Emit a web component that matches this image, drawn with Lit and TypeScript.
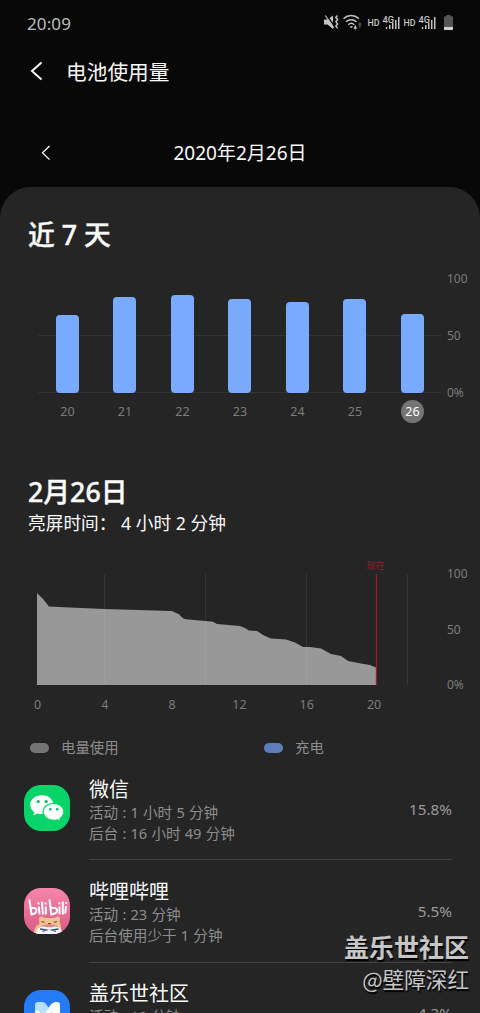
import { LitElement, html, svg, css, nothing } from 'lit';
import { customElement, property } from 'lit/decorators.js';
import { classMap } from 'lit/directives/class-map.js';
import { styleMap } from 'lit/directives/style-map.js';

export interface DayUsage {
  day: string;
  level: number;
}

export interface AppUsage {
  icon: 'wechat' | 'bilibili' | 'members';
  name: string;
  active: string;
  background: string;
  percent: string;
}

const WEEK: DayUsage[] = [
  { day: '20', level: 78 },
  { day: '21', level: 96 },
  { day: '22', level: 98 },
  { day: '23', level: 94 },
  { day: '24', level: 91 },
  { day: '25', level: 94 },
  { day: '26', level: 79 },
];

const APPS: AppUsage[] = [
  {
    icon: 'wechat',
    name: '微信',
    active: '活动 : 1 小时 5 分钟',
    background: '后台 : 16 小时 49 分钟',
    percent: '15.8%',
  },
  {
    icon: 'bilibili',
    name: '哔哩哔哩',
    active: '活动 : 23 分钟',
    background: '后台使用少于 1 分钟',
    percent: '5.5%',
  },
  {
    icon: 'members',
    name: '盖乐世社区',
    active: '活动 : 10 分钟',
    background: '后台 : 2 小时 8 分钟',
    percent: '4.2%',
  },
];

/**
 * @element battery-status-bar
 * @description Clock on the left, system indicators on the right.
 */
@customElement('battery-status-bar')
export class BatteryStatusBar extends LitElement {
  static styles = css`
    :host {
      display: flex;
      align-items: center;
      justify-content: space-between;
      height: 46px;
      padding: 0 24px 0 27px;
      box-sizing: border-box;
      color: #bdbdbd;
      font-size: 17px;
    }

    .clock {
      letter-spacing: 0.1px;
    }

    .indicators {
      display: block;
    }

    .hd {
      font: 500 9px Roboto, sans-serif;
    }

    .net {
      font: 500 9.5px Roboto, sans-serif;
    }
  `;

  @property({ type: String })
  time = '20:09';

  private renderSim(x: number) {
    return svg`
      <g transform="translate(${x} 0)" fill="#c4c4c4">
        <text class="hd" x="-.5" y="11.6" textLength="12" lengthAdjust="spacingAndGlyphs">HD</text>
        <text class="net" x="14.500" y="8.600" textLength="11.500" lengthAdjust="spacingAndGlyphs">4G</text>
        <path d="M17.800 13h1.500v2h-1.500zM21 11h1.500v4H21zM24 9h1.500v6H24zM27 6h1.500v9H27zM30 3h1.500v12H30z" />
      </g>
    `;
  }

  render() {
    return html`
      <span class="clock">${this.time}</span>
      <svg class="indicators" width="132" height="18" viewBox="0 0 132 18">
        <path d="M0 5.500h3.500l5.500-4v13.500l-5.500-4.500H0z" fill="#c4c4c4" />
        <path d="M2.500 1l8 11.500" stroke="#080808" stroke-width="1.400" />
        <path d="M1.300 1.500l8.700 12.500" stroke="#c4c4c4" stroke-width="1.200" />
        <path
          d="M13.500 1.500l-1.600 1.800 1.700 2.200-1.700 2.200 1.700 2.200-1.700 2.200 1.700 2.200"
          fill="none" stroke="#c4c4c4" stroke-width="1.500"
        />
        <g fill="none" stroke="#c4c4c4" stroke-width="1.500">
          <path d="M19.500 4.600c4.600-4 10.800-4 15.400 0" />
          <path d="M22 7.800c3-2.800 7.500-2.800 10.500 0" />
          <path d="M24.300 10.700c1.700-1.600 4.200-1.600 5.900 0" />
        </g>
        <path d="M25.500 12.300h3.500l-1.700 2z" fill="#c4c4c4" />
        <path d="M30.500 11.500h1.600v2h1.400l-2.200 2.300-2.200-2.300h1.400z" fill="#c4c4c4" />
        <path d="M35.200 13.500v-3H34l1.900-2.300 1.900 2.300h-1.200v3z" fill="#5c5c5c" />
        ${this.renderSim(44)} ${this.renderSim(80)}
        <path d="M120 3.200q0-1 1-1h1.500V1h4v1.200h1.500q1 0 1 1V13h-9z" fill="#555" />
        <path d="M120 13h9v2.300q0 .7-.7.700h-7.600q-.7 0-.7-.7z" fill="#d0d0d0" />
      </svg>
    `;
  }
}

/**
 * @element battery-week-chart
 * @description Seven bars, one for each day, with the current day marked.
 */
@customElement('battery-week-chart')
export class BatteryWeekChart extends LitElement {
  static styles = css`
    :host {
      display: grid;
      grid-template-columns: 403px 1fr;
      grid-template-rows: 124px auto;
      align-items: start;
      column-gap: 6px;
      padding-left: 38px;
      color: #7c7c7c;
      font-size: 12px;
    }

    .plot {
      display: grid;
      grid-template-columns: repeat(7, 57.5px);
      align-items: end;
      height: 114px;
      border-bottom: 1px solid #343434;
      background: linear-gradient(#343434, #343434) 0 57px / 100% 1px no-repeat;
    }

    .bar {
      width: 23px;
      margin: 0 0 -1px 17.8px;
      border-radius: 4px;
      background: #78aaff;
    }

    .scale {
      display: flex;
      flex-direction: column;
      justify-content: space-between;
      height: 130px;
      margin-top: -7px;
      line-height: 16px;
    }

    .days {
      display: grid;
      grid-template-columns: repeat(7, 57.5px);
      margin-top: -2px;
      font-size: 12.5px;
    }

    .day {
      width: 23px;
      height: 23px;
      margin-left: 18px;
      border-radius: 50%;
      line-height: 24px;
      text-align: center;
    }

    .day--current {
      background: #747474;
      color: #fff;
    }
  `;

  @property({ attribute: false })
  days: DayUsage[] = [];

  @property({ type: String })
  current = '';

  render() {
    return html`
      <div class="plot">
        ${this.days.map(
          d => html`<div class="bar" style=${styleMap({ height: `${d.level}px` })}></div>`
        )}
      </div>
      <div class="scale"><span>100</span><span>50</span><span>0%</span></div>
      <div class="days">
        ${this.days.map(
          d => html`
            <span class=${classMap({ day: true, 'day--current': d.day === this.current })}>${d.day}</span>
          `
        )}
      </div>
    `;
  }
}

/**
 * @element battery-day-chart
 * @description Battery level over the hours of one day, up to now.
 */
@customElement('battery-day-chart')
export class BatteryDayChart extends LitElement {
  static styles = css`
    :host {
      display: grid;
      grid-template-columns: 441px 1fr;
      column-gap: 6px;
      color: #7c7c7c;
      font-size: 12px;
    }

    svg {
      display: block;
    }

    .now {
      fill: #8f1f28;
      font-size: 9.3px;
    }

    .hour {
      fill: #7c7c7c;
      font-size: 12.5px;
    }

    .scale {
      display: flex;
      flex-direction: column;
      justify-content: space-between;
      height: 127px;
      margin-top: 8px;
      line-height: 16px;
    }
  `;

  render() {
    const grid = [104.5, 205.5, 306.5, 407.5];
    return html`
      <svg width="441" height="160" viewBox="0 0 441 160">
        <path
          d="M37 127V35l6 6 6 7.500 15 .8 40 1.700 68 2 7 3.200 4 4 3 1 19 1.800 8 .8 4 2.200 23 2 5 2 4 2.500 8 .5 7 4.500 7 3 15 1 9 3 8 4.500h7l11 1.500 10 5.500 10 2 7 5 13 2.500 9 1.500 6 2.500V127z"
          fill="#989898"
        />
        ${grid.map(x => svg`<path d="M${x} 16v111" stroke="#fff" stroke-opacity=".075" />`)}
        <path d="M376.500 16v111" stroke="#8f1f28" stroke-width="1.300" />
        <text class="now" x="375.500" y="10.500" text-anchor="middle">现在</text>
        ${[0, 4, 8, 12, 16, 20].map(
          h => svg`<text class="hour" x=${37.5 + h * 16.83} y="151" text-anchor="middle">${h}</text>`
        )}
      </svg>
      <div class="scale"><span>100</span><span>50</span><span>0%</span></div>
    `;
  }
}

/**
 * @element battery-app-row
 * @description One application with its usage times and its share.
 */
@customElement('battery-app-row')
export class BatteryAppRow extends LitElement {
  static styles = css`
    :host {
      display: grid;
      grid-template-columns: 46px 363px;
      column-gap: 19px;
      align-items: center;
      height: 102.4px;
      padding-left: 24px;
    }

    .icon {
      display: block;
      margin-bottom: 2px;
    }

    .body {
      display: flex;
      align-items: center;
      justify-content: space-between;
      height: 100%;
      border-bottom: 1px solid #434343;
      box-sizing: border-box;
    }

    .info {
      padding-top: 3px;
      color: #8d8d8d;
      font-size: 14.6px;
      line-height: 21px;
      word-spacing: 0.4px;
      white-space: nowrap;
    }

    .name {
      color: #fafafa;
      font-size: 20px;
      line-height: 25px;
    }

    .percent {
      color: #9a9a9a;
      font-size: 15.3px;
    }
  `;

  @property({ attribute: false })
  app?: AppUsage;

  private renderWechat() {
    return svg`
      <rect width="46" height="46" rx="17" fill="#07d468" />
      <path d="M18 10.300c-6.600 0-11.800 4.200-11.800 9.500 0 3.200 1.600 5.700 4.200 7.500l-1 3.300 4-2.100c1.400.4 2.900.6 4.600.6 6.600 0 11.500-4 11.500-9.300s-4.900-9.500-11.500-9.500z" fill="#fff" />
      <path d="M29.500 18.300c-5.800 0-10.400 3.800-10.400 8.500s4.600 8.500 10.400 8.500c1.500 0 2.800-.2 4-.6l3.200 1.800-.8-2.900c2.400-1.600 4-4 4-6.800 0-4.700-4.600-8.500-10.400-8.500z" fill="#fff" stroke="#07d468" stroke-width="1.200" />
      <g fill="#07b95a">
        <circle cx="14.200" cy="16.500" r="1.600" /><circle cx="22.200" cy="16.500" r="1.600" />
        <circle cx="26.300" cy="24.300" r="1.300" /><circle cx="33.200" cy="24.300" r="1.300" />
      </g>
    `;
  }

  private renderBilibili() {
    return svg`
      <defs>
        <linearGradient id="pink" x1="0" y1="0" x2="0" y2="1">
          <stop stop-color="#f686ab" /><stop offset="1" stop-color="#d95a82" />
        </linearGradient>
        <clipPath id="tile"><rect width="46" height="46" rx="17" /></clipPath>
      </defs>
      <g clip-path="url(#tile)">
        <rect width="46" height="46" fill="url(#pink)" />
        <g fill="none" stroke="#fff" stroke-width="2" stroke-linejoin="round">
          <path d="M5.300 11.500l2.200 15q5-.8 5-4t-5.300-2.500M14.800 18.500l.8 8M17.800 13.500l1.200 13M21.800 18.500v8" />
          <path d="M25.500 11.500l1.700 15q6-1 6-4t-6-2.700M35.500 18.500v8M38.800 13.500v13M42 18l-.8 7.500" />
          <path d="M14.400 14.500l.2 2M21.500 14.500v2M35.300 14.500v2M42.300 14l-.1 2" />
        </g>
        <path d="M9 46l2-6q1-3 4.500-4l-.5-5q0-3 2.500-2.500l3.500 1.500h9l3.500-1.500q2.500-.5 2.500 2.500l-.5 3q1.500 2 1.500 5v7z" fill="#f0c391" />
        <path d="M17.500 33.500l3 .8M33 33.500l-3 .8M24 35.500h3" stroke="#75513f" stroke-width="1.200" />
        <path d="M17 38q8-4 17 0l-2 3H19z" fill="#d98d83" />
        <path d="M11 46l2.500-5q2.500-3 7-2.500l2 .8h6l2-.8q5 0 6.500 2.500l2 5z" fill="#f5f6fa" />
        <path d="M16 41l6.500 1-4 1.500M34.500 41l-6.500 1 4 1.500" stroke="#3c5273" stroke-width="1.300" fill="none" />
      </g>
    `;
  }

  private renderMembers() {
    return svg`
      <rect width="46" height="46" rx="17" fill="#247bf5" />
      <path d="M24.500 17.500L28 13.500q1.500-1.500 3.500-1.500h1.500q3 0 3 3v18h-8V22l-4.500 4.500-5-3z" fill="#fff" />
      <path d="M11 15q0-3 3-3h4q2.500 0 4 2l3 4.500-5.500 6L18 32h-7z" fill="#b5dffb" />
      <path d="M11 33V22q1-3 3.500-1L19 26v7z" fill="#fff" />
    `;
  }

  private renderIcon(icon: AppUsage['icon']) {
    switch (icon) {
      case 'wechat':
        return this.renderWechat();
      case 'bilibili':
        return this.renderBilibili();
      default:
        return this.renderMembers();
    }
  }

  render() {
    if (!this.app) return nothing;
    return html`
      <svg class="icon" width="46" height="46" viewBox="0 0 46 46">${this.renderIcon(this.app.icon)}</svg>
      <div class="body">
        <div class="info">
          <div class="name">${this.app.name}</div>
          <div>${this.app.active}</div>
          <div>${this.app.background}</div>
        </div>
        <span class="percent">${this.app.percent}</span>
      </div>
    `;
  }
}

@customElement('app-root')
export class AppRoot extends LitElement {
  static styles = css`
    :host {
      display: block;
      position: relative;
      height: 1013px;
      overflow: hidden;
      background: #080808;
      color: #fafafa;
      font-family: 'Noto Sans', 'Noto Sans CJK SC', sans-serif;
    }

    .title-bar {
      display: flex;
      align-items: center;
      gap: 22px;
      height: 50px;
      padding-left: 30px;
    }

    .title {
      margin: 0;
      padding-top: 1px;
      font-size: 20.7px;
      font-weight: 400;
      line-height: 28px;
    }

    .date-nav {
      display: grid;
      grid-template-columns: 40px 1fr 40px;
      align-items: center;
      height: 40px;
      margin-top: 37px;
      padding: 0 11px;
    }

    .date-nav .chevron {
      justify-self: end;
    }

    .chevron {
      display: block;
      fill: none;
      stroke: #fafafa;
    }

    .date {
      text-align: center;
      font-size: 19px;
      line-height: 28px;
    }

    .panel {
      height: 826px;
      margin-top: 14px;
      border-radius: 31px 31px 0 0;
      background: #252525;
      overflow: hidden;
    }

    .heading {
      margin: 0;
      padding-left: 28px;
      font-size: 26.8px;
      font-weight: 500;
      line-height: 36px;
      -webkit-text-stroke: 0.4px #fafafa;
    }

    .heading--week {
      padding-top: 30px;
    }

    .heading--day {
      padding-top: 51px;
    }

    battery-week-chart {
      margin-top: 25px;
    }

    .screen-time {
      padding-left: 28px;
      font-size: 17.7px;
      line-height: 26px;
      white-space: pre;
    }

    battery-day-chart {
      margin-top: 22px;
    }

    .legend {
      display: grid;
      grid-template-columns: 234px 1fr;
      height: 20px;
      margin-top: 20px;
      padding-left: 30px;
      color: #8d8d8d;
      font-size: 14.4px;
      line-height: 20px;
    }

    .key {
      display: flex;
      align-items: center;
      gap: 12px;
    }

    .swatch {
      width: 19px;
      height: 10px;
      border-radius: 5px;
      background: #747474;
    }

    .swatch--charge {
      background: #5d7eb8;
    }

    .watermark {
      position: absolute;
      right: 11px;
      bottom: 18px;
      color: #c6c6c6;
      text-align: right;
      text-shadow: 1px 2px 1px #000;
      font-family: 'Noto Sans CJK SC', sans-serif;
      font-size: 21.6px;
      line-height: 32px;
    }

    .watermark strong {
      display: block;
      padding-bottom: 1px;
      font-size: 25px;
    }
  `;

  render() {
    return html`
      <battery-status-bar></battery-status-bar>
      <header class="title-bar">
        <svg class="chevron" width="14" height="20" viewBox="0 0 14 20">
          <path d="M11.500 1.500L2 10l9.500 8.500" stroke-width="2" />
        </svg>
        <h1 class="title">电池使用量</h1>
      </header>
      <nav class="date-nav">
        <svg class="chevron" width="10" height="16" viewBox="0 0 10 16">
          <path d="M8.500 1L1.500 7.800l7 6.800" stroke-width="1.300" />
        </svg>
        <span class="date">2020年2月26日</span>
      </nav>
      <main class="panel">
        <h2 class="heading heading--week">近 7 天</h2>
        <battery-week-chart .days=${WEEK} current="26"></battery-week-chart>
        <h2 class="heading heading--day">2月26日</h2>
        <div class="screen-time">亮屏时间： 4 小时 2 分钟</div>
        <battery-day-chart></battery-day-chart>
        <div class="legend">
          <span class="key"><i class="swatch"></i>电量使用</span>
          <span class="key"><i class="swatch swatch--charge"></i>充电</span>
        </div>
        ${APPS.map(app => html`<battery-app-row .app=${app}></battery-app-row>`)}
      </main>
      <div class="watermark"><strong>盖乐世社区</strong>@壁障深红</div>
    `;
  }
}

declare global {
  interface HTMLElementTagNameMap {
    'app-root': AppRoot;
    'battery-status-bar': BatteryStatusBar;
    'battery-week-chart': BatteryWeekChart;
    'battery-day-chart': BatteryDayChart;
    'battery-app-row': BatteryAppRow;
  }
}
